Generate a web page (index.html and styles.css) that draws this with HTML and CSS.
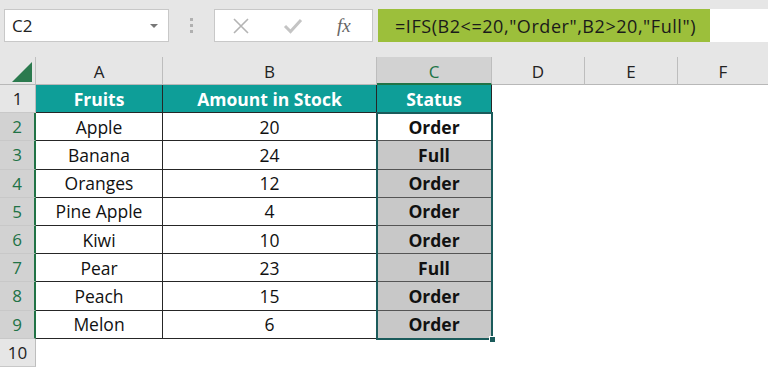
FILE: index.html
```html
<!DOCTYPE html>
<html lang="en">
<head>
    <meta charset="UTF-8">
    <title>IFS formula</title>
    <link rel="stylesheet" href="styles.css">
</head>
<body>
<div class="toolbar">
    <div class="name-box">
        <span>C2</span>
        <span class="caret"></span>
    </div>
    <div class="grip"><i></i><i></i><i></i></div>
    <div class="fx-buttons">
        <svg width="18" height="18" viewBox="0 0 18 18"><path d="M2 2 L16 16 M16 2 L2 16" stroke="#b4b4b4" stroke-width="1.6" fill="none"/></svg>
        <svg width="20" height="18" viewBox="0 0 20 18"><path d="M2 9 L7.5 14.5 L18 3" stroke="#c4c4c4" stroke-width="3" fill="none"/></svg>
        <span class="fx">fx</span>
    </div>
    <div class="formula-bar">
        <span class="formula">=IFS(B2&lt;=20,"Order",B2&gt;20,"Full")</span>
    </div>
</div>

<div class="sheet">
    <!-- column headers -->
    <div class="corner"><span class="tri"></span></div>
    <div class="col-head">A</div>
    <div class="col-head">B</div>
    <div class="col-head active">C</div>
    <div class="col-head">D</div>
    <div class="col-head">E</div>
    <div class="col-head last">F</div>

    <!-- row 1 -->
    <div class="row-head">1</div>
    <div class="cell head">Fruits</div>
    <div class="cell head">Amount in Stock</div>
    <div class="cell head">Status</div>
    <div class="blank"></div><div class="blank"></div><div class="blank"></div>

    <div class="row-head sel">2</div>
    <div class="cell">Apple</div>
    <div class="cell">20</div>
    <div class="cell status on">Order</div>
    <div class="blank"></div><div class="blank"></div><div class="blank"></div>

    <div class="row-head sel">3</div>
    <div class="cell">Banana</div>
    <div class="cell">24</div>
    <div class="cell status">Full</div>
    <div class="blank"></div><div class="blank"></div><div class="blank"></div>

    <div class="row-head sel">4</div>
    <div class="cell">Oranges</div>
    <div class="cell">12</div>
    <div class="cell status">Order</div>
    <div class="blank"></div><div class="blank"></div><div class="blank"></div>

    <div class="row-head sel">5</div>
    <div class="cell">Pine Apple</div>
    <div class="cell">4</div>
    <div class="cell status">Order</div>
    <div class="blank"></div><div class="blank"></div><div class="blank"></div>

    <div class="row-head sel">6</div>
    <div class="cell">Kiwi</div>
    <div class="cell">10</div>
    <div class="cell status">Order</div>
    <div class="blank"></div><div class="blank"></div><div class="blank"></div>

    <div class="row-head sel">7</div>
    <div class="cell">Pear</div>
    <div class="cell">23</div>
    <div class="cell status">Full</div>
    <div class="blank"></div><div class="blank"></div><div class="blank"></div>

    <div class="row-head sel">8</div>
    <div class="cell">Peach</div>
    <div class="cell">15</div>
    <div class="cell status">Order</div>
    <div class="blank"></div><div class="blank"></div><div class="blank"></div>

    <div class="row-head sel">9</div>
    <div class="cell">Melon</div>
    <div class="cell">6</div>
    <div class="cell status">Order</div>
    <div class="blank"></div><div class="blank"></div><div class="blank"></div>

    <div class="row-head">10</div>
    <div class="blank"></div><div class="blank"></div><div class="blank"></div>
    <div class="blank"></div><div class="blank"></div><div class="blank"></div>

    <!-- selected range C2:C9 -->
    <div class="selection"><span class="handle"></span></div>
</div>
</body>
</html>
```

FILE: styles.css
```css
:root {
    --bar-bg: #e6e6e6;
    --head-sel: #d2d2d2;
    --excel-green: #217346;
    --teal: #0e9e98;
    --sel-border: #1b5b5b;
    --cell-line: #262626;
}

* {
    margin: 0;
    padding: 0;
    box-sizing: border-box;
}

body {
    width: 768px;
    height: 367px;
    overflow: hidden;
    background: var(--bar-bg);
    font-family: "Open Sans", sans-serif;
    color: #111;
}

/* formula bar */
.toolbar {
    height: 57px;
    display: flex;
    align-items: flex-start;
    padding: 9px 0 0 4px;
}

.name-box {
    width: 165px;
    height: 33px;
    background: #fff;
    border: 1px solid #c8c8c8;
    display: flex;
    align-items: center;
    justify-content: space-between;
    padding: 0 10px 0 7px;
    font-size: 17px;
    color: #222;
}

.caret {
    width: 0;
    height: 0;
    border-left: 4px solid transparent;
    border-right: 4px solid transparent;
    border-top: 4px solid #777;
}

.grip {
    width: 45px;
    height: 33px;
    display: flex;
    flex-direction: column;
    align-items: center;
    justify-content: center;
    gap: 3px;
}

.grip i {
    width: 3px;
    height: 3px;
    background: #b0b0b0;
}

.fx-buttons {
    width: 159px;
    height: 33px;
    background: #fff;
    border: 1px solid #c8c8c8;
    display: flex;
    align-items: center;
    padding-left: 17px;
    gap: 33px;
}

.fx {
    font-family: "Liberation Serif", serif;
    font-style: italic;
    font-size: 19px;
    color: #666;
    margin-left: 1px;
}

.formula-bar {
    flex: 1;
    height: 33px;
    margin-left: 5px;
    background: #fff;
}

.formula {
    display: flex;
    align-items: center;
    width: 332px;
    height: 33px;
    padding-left: 17px;
    background: #9cbf3b;
    font-size: 18px;
    letter-spacing: 0.55px;
    color: #1a1a1a;
}

/* grid */
.sheet {
    display: grid;
    grid-template-columns: 36px 127px 214px 115px 93px 93px 90px;
    grid-template-rows: 28px repeat(10, 28.2px);
    background: #fff;
    position: relative;
}

.corner {
    background: var(--bar-bg);
    border-right: 1px solid #c0c0c0;
    border-bottom: 1px solid #b8b8b8;
    position: relative;
}

.tri {
    position: absolute;
    right: 3px;
    bottom: 2px;
    width: 0;
    height: 0;
    border-left: 20px solid transparent;
    border-bottom: 20px solid #2b7a4e;
}

.col-head {
    background: var(--bar-bg);
    border-right: 1px solid #bdbdbd;
    border-bottom: 1px solid #b8b8b8;
    display: flex;
    align-items: center;
    justify-content: center;
    font-size: 17px;
    padding-top: 2px;
    color: #222;
}

.col-head.active {
    background: var(--head-sel);
    color: var(--excel-green);
    border-bottom: 2px solid var(--excel-green);
}

.col-head.last {
    border-right: none;
}

.row-head {
    background: var(--bar-bg);
    border-right: 1px solid #bdbdbd;
    border-bottom: 1px solid #c8c8c8;
    display: flex;
    align-items: center;
    justify-content: center;
    font-size: 17px;
    color: #222;
}

.row-head.sel {
    background: var(--head-sel);
    color: var(--excel-green);
    border-right: 2px solid var(--excel-green);
}

.cell {
    display: flex;
    align-items: center;
    justify-content: center;
    border-right: 1px solid var(--cell-line);
    border-bottom: 1px solid var(--cell-line);
    font-size: 17.5px;
    background: #fff;
}

.cell.head {
    background: var(--teal);
    color: #fff;
    font-weight: bold;
}

.cell.status {
    background: #c8c8c8;
    font-weight: bold;
    border-bottom-color: #555;
}

.cell.status.on {
    background: #fff;
}

.blank {
    background: #fff;
}

.selection {
    grid-column: 4 / 5;
    grid-row: 3 / 11;
    position: absolute;
    inset: -1px;
    border: 2px solid var(--sel-border);
    pointer-events: none;
}

.handle {
    position: absolute;
    right: -4px;
    bottom: -4px;
    width: 6px;
    height: 6px;
    background: var(--sel-border);
    border-left: 1px solid #fff;
    border-top: 1px solid #fff;
}
```
